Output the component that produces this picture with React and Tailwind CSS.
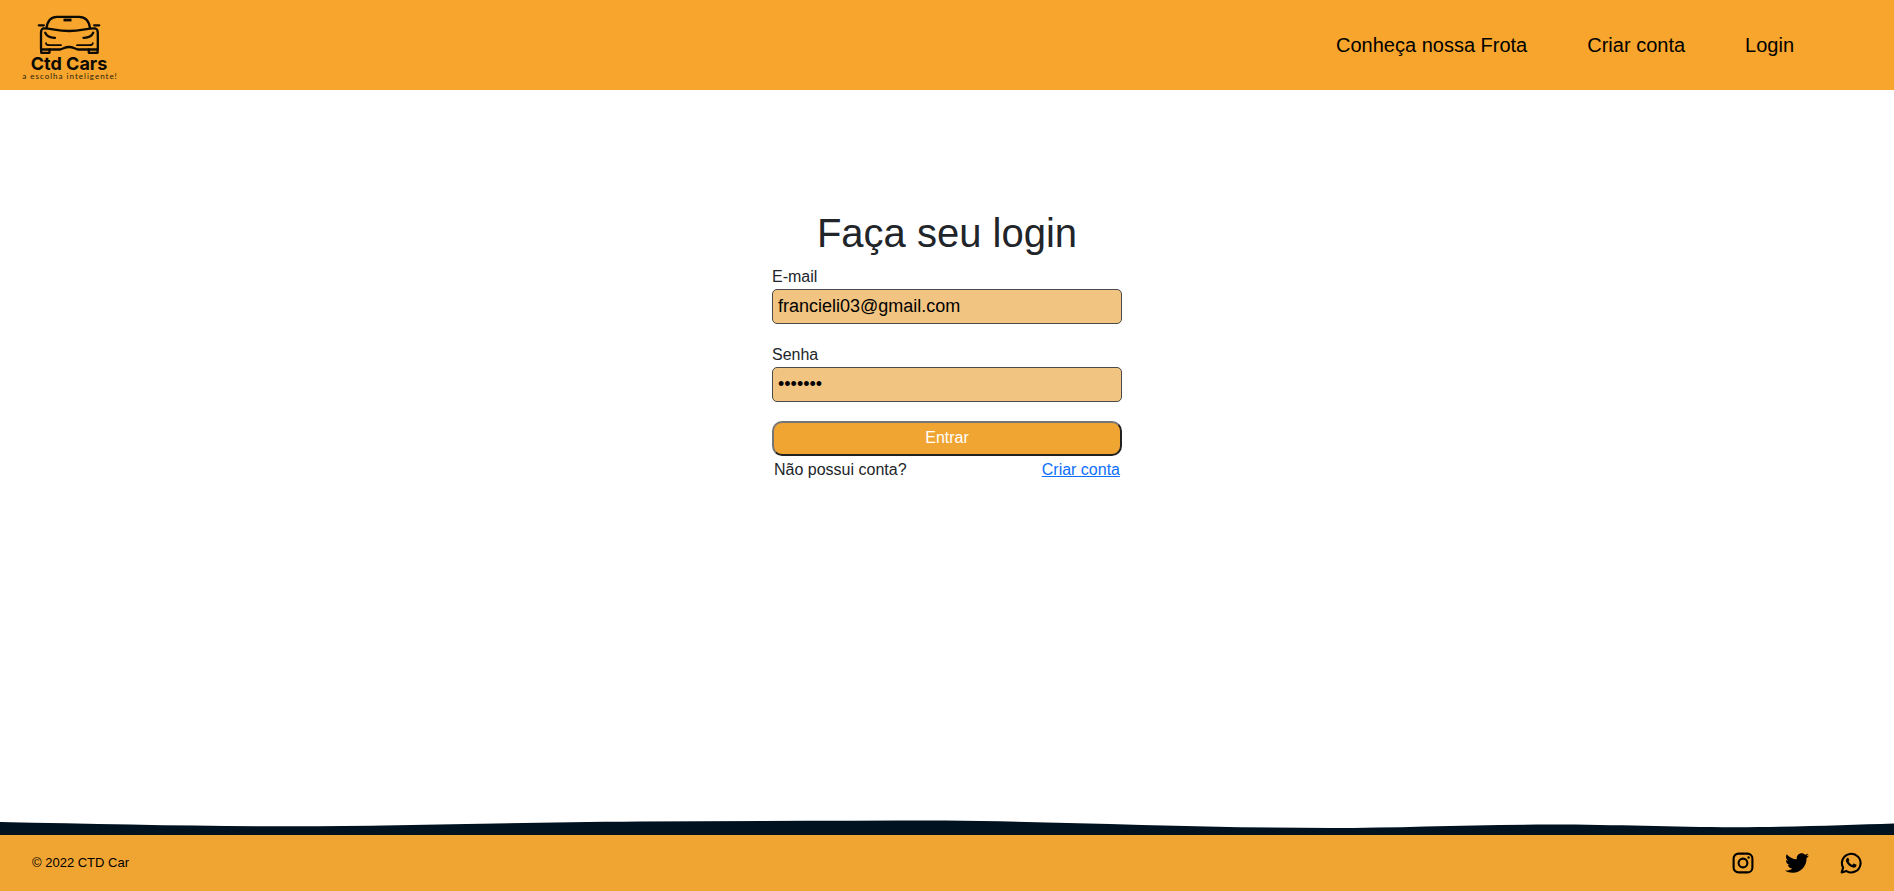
import { FaTwitter } from "react-icons/fa";

const navLinks = ["Conheça nossa Frota", "Criar conta", "Login"];

function InstagramIcon() {
  return (
    <svg viewBox="0 0 24 24" className="size-6" fill="none" stroke="currentColor" aria-hidden="true">
      <rect x="2.6" y="2.6" width="18.8" height="18.8" rx="5" strokeWidth="2.1" />
      <circle cx="12" cy="12" r="4.4" strokeWidth="2.1" />
      <circle cx="17.6" cy="6.5" r="1.2" fill="currentColor" stroke="none" />
    </svg>
  );
}

function TwitterIcon() {
  return <FaTwitter size={24} aria-hidden="true" />;
}

function WhatsAppIcon() {
  return (
    <svg viewBox="0 0 24 24" className="size-6" fill="none" stroke="currentColor" aria-hidden="true">
      <path
        d="M2.7 21.4 L4.1 16.6 A9.3 9.3 0 1 1 7.5 20.1 Z"
        strokeWidth="2.1"
        strokeLinejoin="round"
      />
      <path
        d="M8.3 7.1 C8.7 6.7 9.3 6.8 9.5 7.3 L10.3 9.2 C10.4 9.6 10.1 10 9.6 10.6 C10.4 12.1 11.6 13.3 13.3 14 L14.4 12.8 C14.7 12.5 15 12.5 15.3 12.7 L17.2 13.6 C17.8 13.9 17.5 15.1 17 15.7 C16.1 16.7 14.6 16.9 13.2 16.3 C10.5 15.3 8.6 13.4 7.3 11 C6.5 9.5 7 8 8.3 7.1 Z"
        fill="currentColor"
        stroke="none"
      />
    </svg>
  );
}

const socialLinks = [
  { name: "Instagram", Icon: InstagramIcon },
  { name: "Twitter", Icon: TwitterIcon },
  { name: "WhatsApp", Icon: WhatsAppIcon },
];

function Logo() {
  return (
    <svg
      viewBox="0 0 140 90"
      className="block h-[90px] w-[140px]"
      role="img"
      aria-label="Ctd Cars, a escolha inteligente!"
    >
      <g
        fill="none"
        stroke="#0d0a04"
        strokeWidth="2.3"
        strokeLinecap="round"
        strokeLinejoin="round"
      >
        <path d="M46.5 28 C47.5 21 51 16.8 57 16.8 H79 C86 16.8 89 21 90 28" />
        <path d="M63.5 20 H71.5" strokeWidth="2.8" strokeLinecap="butt" />
        <path d="M38.8 25.3 H43.8" />
        <path d="M99.2 25.3 H94.2" />
        <path d="M43 28.5 C50 28 56 31 69 31 C82 31 88 28 95.5 28.5 C97.3 29 97.8 30.5 97.8 33 V49.5 H78 C74.5 49 73.5 47 69 47 C64.5 47 63.5 49 60 49.5 H41 V33 C41 30.5 41.5 29 43 28.5 Z" />
        <path d="M41.2 49 V52.8 H49.5 V49.5 M97.6 49 V52.8 H88.8 V49.5" />
        <path d="M45.2 32.8 C47 36.5 50 38 55 37.8" />
        <path d="M93.2 32.8 C91.5 36.5 88.5 38 83.5 37.8" />
        <path d="M46 43.2 C46 45.6 47.5 45.2 61 45.2" strokeWidth="1.8" />
        <path d="M92.8 43.2 C92.8 45.6 91.3 45.2 77 45.2" strokeWidth="1.8" />
      </g>
      <text
        x="69"
        y="70"
        textAnchor="middle"
        fill="#0d0a04"
        className="font-['Inter',sans-serif] text-[18px] font-bold"
      >
        Ctd Cars
      </text>
      <text
        x="70"
        y="79"
        textAnchor="middle"
        fill="#2a1e0c"
        className="font-['Lato',sans-serif] text-[8px] tracking-[1px]"
      >
        a escolha inteligente!
      </text>
    </svg>
  );
}

function Header() {
  return (
    <header className="flex items-center justify-between bg-[#f7a52c] pr-[100px]">
      <a href="#inicio">
        <Logo />
      </a>
      <nav className="flex gap-[60px] text-xl text-black">
        {navLinks.map((label) => (
          <a key={label} href="#nav">
            {label}
          </a>
        ))}
      </nav>
    </header>
  );
}

function Field({ id, label, type, value }) {
  return (
    <div className="mb-[19px] flex flex-col">
      <label htmlFor={id} className="leading-6">
        {label}
      </label>
      <input
        id={id}
        type={type}
        defaultValue={value}
        className="h-[35px] rounded-[5px] border border-[#4a4a4a] bg-[#f1c482] px-[5px] text-lg text-black outline-none"
      />
    </div>
  );
}

function LoginForm() {
  return (
    <form className="flex w-[350px] flex-col" onSubmit={(e) => e.preventDefault()}>
      <h1 className="mb-2 text-center text-[40px] leading-12">Faça seu login</h1>
      <Field id="email" label="E-mail" type="email" value="francieli03@gmail.com" />
      <Field id="senha" label="Senha" type="password" value="abcdefg" />
      <button
        type="submit"
        className="h-[35px] rounded-[10px] border-2 border-t-[#767676] border-r-[#212121] border-b-[#212121] border-l-[#767676] bg-[#f0a532] pb-[2px] text-white"
      >
        Entrar
      </button>
      <div className="flex justify-between px-[2px] pt-[2px] leading-6">
        <span>Não possui conta?</span>
        <a href="#criar-conta" className="text-[#0d6efd] underline">
          Criar conta
        </a>
      </div>
    </form>
  );
}

function Footer() {
  return (
    <footer>
      <svg
        viewBox="0 0 1894 16"
        preserveAspectRatio="none"
        className="block h-4 w-full"
        aria-hidden="true"
      >
        <path
          d="M0 3 C100 5 200 7.3 290 7.3 C400 7.3 500 3.5 640 2.6 C740 2.2 840 1.6 945 1.6 C1060 2.5 1200 9 1330 9 C1400 9 1470 5.6 1550 5.6 C1620 5.6 1670 8.3 1735 8.3 C1800 8 1850 6 1894 4.6 V16 H0 Z"
          fill="#001220"
        />
      </svg>
      <div className="flex h-14 items-center justify-between bg-[#f0a532] pr-[31px] pl-8 text-black">
        <p className="text-[13px]">© 2022 CTD Car</p>
        <div className="flex gap-[30px]">
          {socialLinks.map(({ name, Icon }) => (
            <a key={name} href="#social" aria-label={name}>
              <Icon />
            </a>
          ))}
        </div>
      </div>
    </footer>
  );
}

export default function App() {
  return (
    <div className="flex min-h-screen flex-col bg-white font-['Liberation_Sans',Arial,sans-serif] text-base text-[#212529]">
      <Header />
      <main className="flex flex-1 flex-col items-center pt-[119px]">
        <LoginForm />
      </main>
      <Footer />
    </div>
  );
}
